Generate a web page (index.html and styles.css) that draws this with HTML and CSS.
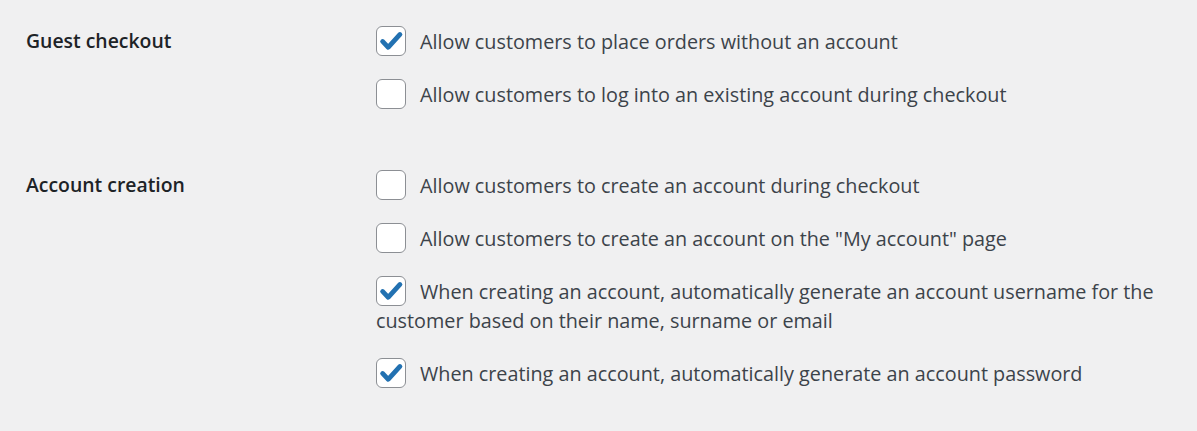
FILE: index.html
```html
<!DOCTYPE html>
<html lang="en">
<head>
    <meta charset="UTF-8">
    <title>Accounts &amp; Privacy</title>
    <link rel="stylesheet" href="styles.css">
</head>
<body>
    <div class="settings">
        <div class="field">
            <div class="field-title">Guest checkout</div>
            <div class="field-options">
                <label class="option">
                    <span class="box checked"><svg viewBox="0 0 20 20"><path d="M4 10.3l4 4.2 8.4-9.2"/></svg></span>Allow customers to place orders without an account
                </label>
                <label class="option">
                    <span class="box"></span>Allow customers to log into an existing account during checkout
                </label>
            </div>
        </div>

        <div class="field">
            <div class="field-title">Account creation</div>
            <div class="field-options">
                <label class="option">
                    <span class="box"></span>Allow customers to create an account during checkout
                </label>
                <label class="option">
                    <span class="box"></span>Allow customers to create an account on the "My account" page
                </label>
                <label class="option">
                    <span class="box checked"><svg viewBox="0 0 20 20"><path d="M4 10.3l4 4.2 8.4-9.2"/></svg></span>When creating an account, automatically generate an account username for the customer based on their name, surname or email
                </label>
                <label class="option">
                    <span class="box checked"><svg viewBox="0 0 20 20"><path d="M4 10.3l4 4.2 8.4-9.2"/></svg></span>When creating an account, automatically generate an account password
                </label>
            </div>
        </div>
    </div>
</body>
</html>
```

FILE: styles.css
```css
body {
    margin: 0;
    background-color: #f0f0f1;
    font-family: "Open Sans", "Noto Sans", sans-serif;
    color: #3c434a;
}
.settings {
    padding: 26px 26px 0 26px;
}
.field {
    display: grid;
    grid-template-columns: 350px 1fr;
    margin-bottom: 61px;
}
.field:last-child {
    margin-bottom: 0;
}
.field-title {
    font-size: 19.4px;
    font-weight: 600;
    line-height: 29px;
    color: #1d2327;
}
.field-options {
    max-width: 790px;
}
.option {
    display: block;
    font-size: 19.8px;
    line-height: 29px;
    margin-bottom: 23px;
}
.field .option:last-child {
    margin-bottom: 0;
}
.box {
    display: inline-block;
    box-sizing: border-box;
    width: 30px;
    height: 30px;
    margin-right: 14px;
    vertical-align: -7px;
    border: 1.5px solid #8c8f94;
    border-radius: 6px;
    background: #fff;
}
.box svg {
    display: block;
    width: 100%;
    height: 100%;
}
.box path {
    fill: none;
    stroke: #2271b1;
    stroke-width: 3.4;
    stroke-linecap: round;
    stroke-linejoin: round;
}
```
